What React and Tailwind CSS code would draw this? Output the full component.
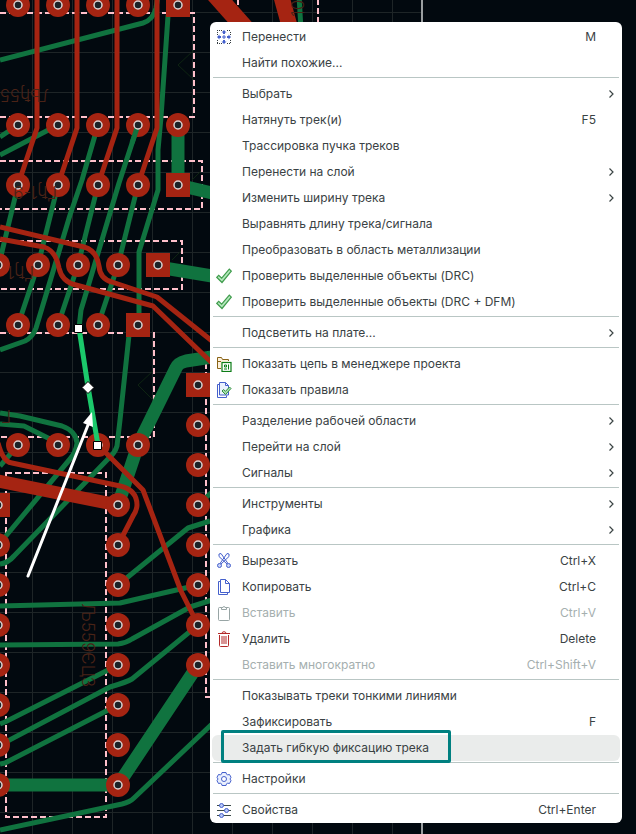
const groups = [
    [
        { label: 'Перенести', icon: 'move', keys: 'M' },
        { label: 'Найти похожие...' },
    ],
    [
        { label: 'Выбрать', sub: true },
        { label: 'Натянуть трек(и)', keys: 'F5' },
        { label: 'Трассировка пучка треков' },
        { label: 'Перенести на слой', sub: true },
        { label: 'Изменить ширину трека', sub: true },
        { label: 'Выравнять длину трека/сигнала' },
        { label: 'Преобразовать в область металлизации' },
        { label: 'Проверить выделенные объекты (DRC)', icon: 'check' },
        { label: 'Проверить выделенные объекты (DRC + DFM)', icon: 'check' },
    ],
    [{ label: 'Подсветить на плате...', sub: true }],
    [
        { label: 'Показать цепь в менеджере проекта', icon: 'folder' },
        { label: 'Показать правила', icon: 'rules' },
    ],
    [
        { label: 'Разделение рабочей области', sub: true },
        { label: 'Перейти на слой', sub: true },
        { label: 'Сигналы', sub: true },
    ],
    [
        { label: 'Инструменты', sub: true },
        { label: 'Графика', sub: true },
    ],
    [
        { label: 'Вырезать', icon: 'cut', keys: 'Ctrl+X' },
        { label: 'Копировать', icon: 'copy', keys: 'Ctrl+C' },
        { label: 'Вставить', icon: 'paste', keys: 'Ctrl+V', disabled: true },
        { label: 'Удалить', icon: 'trash', keys: 'Delete' },
        { label: 'Вставить многократно', keys: 'Ctrl+Shift+V', disabled: true },
    ],
    [
        { label: 'Показывать треки тонкими линиями' },
        { label: 'Зафиксировать', keys: 'F' },
        { label: 'Задать гибкую фиксацию трека', active: true },
    ],
    [{ label: 'Настройки', icon: 'gear' }],
    [{ label: 'Свойства', icon: 'sliders', keys: 'Ctrl+Enter' }],
]

const icons = {
    move: (
        <>
            <path d="M1 1.500h5M11 1.500h4M1 14.500h5M11 14.500h4M1.500 3v3M14.500 3v3M1.500 11v3M14.500 11v3" stroke="#333b40" strokeDasharray="1 1" />
            <path d="M8 1l2.500 2.500H9V5H7V3.500H5.500zM8 15l2.500-2.500H9V11H7v1.500H5.500zM1 8l2.500-2.500V7H5v2H3.500v1.500zM15 8l-2.500-2.500V7H11v2h1.500v1.500z" fill="#4560cc" />
            <path d="M7 7h2v2H7z" stroke="#4560cc" />
        </>
    ),
    check: (
        <path d="M.700 9.300l2-2 3 2.900L13.300 1.200l2 2L6 14.500z" fill="#b5e8bd" stroke="#3f9c4c" strokeWidth="1.200" />
    ),
    folder: (
        <>
            <path d="M5 12.500H1.500v-11h4l1 2h6V5M1.500 5.500H5" fill="#fdf1dc" stroke="#8a6418" />
            <rect x="6" y="6.500" width="9" height="9" fill="#fff" stroke="#0c7c16" strokeWidth="1.200" />
            <path d="M8.500 9h2v2h-2zM12.500 8.500v5M8 13h3" stroke="#0c7c16" />
        </>
    ),
    rules: (
        <>
            <path d="M3.500 2.500h-2v13h9v-2" stroke="#4560cc" />
            <path d="M3.500 .500h6l3 3v9.500h-9zM9.500 .500v3h3" fill="#eaf1fd" stroke="#4560cc" />
            <path d="M6 9l1.500-1.500 2 1.800L13.500 5 15 6.500l-5.500 6z" fill="#a8e0b0" stroke="#2f8c3e" />
        </>
    ),
    cut: (
        <>
            <path d="M3 1v2.500L11 11M5 .500L12 10.500M13 1v2.500L5 11M11 .500L4 10.500M3 1L5 .500M13 1L11 .500" stroke="#4560cc" />
            <circle cx="3.500" cy="12.500" r="2" fill="#c9d4f7" stroke="#4560cc" />
            <circle cx="12.500" cy="12.500" r="2" fill="#c9d4f7" stroke="#4560cc" />
        </>
    ),
    copy: (
        <path d="M4.500 2.500h-2v13h9v-2M4.500 .500h5l4 4v9h-9zM9.500 .500v4h4" stroke="#4560cc" />
    ),
    paste: (
        <>
            <rect x="2.500" y="2.500" width="11" height="13" rx="1" stroke="#98a5a5" />
            <path d="M5.500 4.500v-2h1.500a1 1 0 0 1 2 0h1.500v2z" fill="#fff" stroke="#98a5a5" />
        </>
    ),
    trash: (
        <path d="M2 2.500h12M3.500 4v10.500a1 1 0 0 0 1 1h7a1 1 0 0 0 1-1V4M6 2.500a2 1.800 0 0 1 4 0M6 5v8M8 5v8M10 5v8" stroke="#b32a2a" />
    ),
    gear: (
        <>
            <path d="M6 1.500h4l.500 1.700 1.200.600 1.800-.300 1.500 2.800-1 1.700 1 1.700-1.500 2.800-1.800-.300-1.200.600-.500 1.700H6l-.500-1.700-1.200-.600-1.800.300L1 9.700 2 8 1 6.300l1.500-2.800 1.800.300 1.200-.600z" fill="#eaf0fd" stroke="#4560cc" strokeLinejoin="round" />
            <circle cx="8" cy="8" r="2.500" fill="#fff" stroke="#4560cc" />
        </>
    ),
    sliders: (
        <>
            <path d="M1 3.500h14M1 8.500h14M1 13.500h14" stroke="#3c4b4b" />
            <circle cx="5.500" cy="3.500" r="2" fill="#b9c8f8" stroke="#4560cc" />
            <circle cx="10.500" cy="8.500" r="2" fill="#b9c8f8" stroke="#4560cc" />
            <circle cx="5.500" cy="13.500" r="2" fill="#b9c8f8" stroke="#4560cc" />
        </>
    ),
}

// board geometry
const roundPads = [
    [18, 5], [58, 5], [98, 5], [138, 5],
    [18, 125], [58, 125], [98, 125], [138, 125], [178, 125],
    [18, 185], [58, 185], [98, 185], [138, 185],
    [-2, 265], [38, 265], [78, 265], [118, 265],
    [18, 325], [58, 325], [98, 325],
    [18, 445], [58, 445], [98, 445], [138, 445],
    ...[425, 465, 505, 545, 585, 625, 665].map(y => [198, y]),
    ...[505, 545, 585, 625, 665, 705, 745, 785].map(y => [118, y]),
    ...[545, 585, 625, 665, 705, 745, 785].map(y => [-2, y]),
]

const squarePads = [[178, 5], [178, 185], [158, 265], [138, 325], [198, 385], [-2, 505]]

const outlines = [
    'M0 13H194V117H0',
    'M0 161H202V209H0',
    'M0 241H182V289H0',
    'M0 333H154V437H0',
    'M6 473H106V817H6Z',
    'M240 352H206V697H240',
    'M238 -10V30M318 -10V30',
]

const greenThin = [
    'M0 60L143 23Q153 20 156 8L158 -5',
    'M178 -5L168 16L161 117L158 150V190L139 252V325L129 335L120 420L117 446Q115 453 108 459L14 556Q8 563 0 564',
    'M0 137L18 125', 'M0 155L58 125',
    'M98 125L82 180L70 215L36 328Q33 337 25 341L0 350',
    'M138 125L119 183L81 310L79 328',
    'M18 185L0 260',
    'M58 185L38 265L18 325',
    'M98 185L78 265L58 325',
    'M138 185L118 265L98 325',
    'M0 413L20 416L62 426Q76 431 77 443Q76 452 70 459L5 537',
    'M0 424L24 426L48 438L58 445', 'M0 466L18 445',
    'M118 585L188 528L210 521', 'M198 505L212 492',
    'M0 606L120 603L198 585',
    'M0 645L118 644Q126 643 132 639L190 607L212 600',
    'M118 665L5 722L0 724',
    'M198 625L132 679Q127 682 110 687L0 745',
    'M118 705L5 763L0 764',
    'M0 830L122 804Q130 802 134 798L212 724',
    'M299 -5L301 30', 'M209 -4L245 24',
]

const redThin = [
    'M37 -5V128L18 185', 'M77 -5V128L58 185', 'M117 -5V128L98 185', 'M157 -5V128L138 185',
    'M0 227L84 247Q97 251 99 266Q100 279 112 282L157 297L212 341',
    'M0 239L44 247Q56 251 59 268Q62 282 76 285L153 306L212 363',
    'M98 445L143 490L181 591L198 625',
    'M-2 443Q3 462 12 463L120 486Q137 490 137 505Q137 510 133 516L118 545',
]

function Board() {
    const cols = Array.from({ length: 10 }, (_, i) => 32 + i * 40)
    const rows = Array.from({ length: 21 }, (_, i) => 12 + i * 40)
    return (
        <svg className="absolute inset-0 h-full w-full" aria-hidden="true" fill="none" fontFamily="Inter, sans-serif">
            <g stroke="#1e2527">
                {cols.map(x => <path key={x} d={`M${x}.5 0V900`} />)}
                {rows.map(y => <path key={y} d={`M0 ${y}.5H422`} />)}
            </g>
            <path d="M422 0V900" stroke="#9a9ea0" strokeWidth="2" />

            <g stroke="#0e2412">
                <path d="M194 50L178 65L194 80" />
                <path d="M154 370L138 385L154 401" />
                <path d="M192 180L202 170M172 260L182 250" />
            </g>

            <g stroke="#ffc0cb" strokeWidth="2" strokeDasharray="6 3">
                {outlines.map(d => <path key={d} d={d} />)}
            </g>

            <g stroke="#10733f" strokeWidth="5" strokeLinejoin="round">
                {greenThin.map(d => <path key={d} d={d} />)}
            </g>
            <g stroke="#10733f" strokeWidth="13" strokeLinejoin="round">
                <path d="M178 125V185L212 193" />
                <path d="M158 267L212 276" />
                <path d="M118 505L138 445L176 368Q178 363 186 361L212 357" />
                <path d="M-2 785H118L198 665" />
            </g>

            <g stroke="#a52412" strokeWidth="5" strokeLinejoin="round">
                {redThin.map(d => <path key={d} d={d} />)}
            </g>
            <path d="M-2 481L118 505" stroke="#a52412" strokeWidth="13" />
            <path d="M213 -8L245 28" stroke="#a52412" strokeWidth="18" />
            <path d="M281 -5L290 28" stroke="#a52412" strokeWidth="16" />

            <g fill="#a52412">
                {roundPads.map(([x, y]) => <circle key={`${x}-${y}`} cx={x} cy={y} r="12" />)}
                {squarePads.map(([x, y]) => <rect key={`${x}-${y}`} x={x - 12} y={y - 12} width="24" height="24" />)}
            </g>
            <path d="M138 125L132 143" stroke="#10733f" strokeWidth="5" />
            <g fill="#1b2328" stroke="#dcd3d1" strokeWidth="1.500">
                {[...roundPads, ...squarePads].map(([x, y]) => <circle key={`${x}-${y}`} cx={x} cy={y} r="4" />)}
            </g>

            <g fill="#4a2317" fontSize="17" fontWeight="300">
                <text transform="translate(49 89) rotate(180)">Љђ55</text>
                <text transform="translate(57 186) rotate(180)">Ґђ1-9</text>
                <text transform="translate(34 266) rotate(180)">Ґђ1</text>
                <text transform="translate(82 603) rotate(90)">Љ559ЄЦ3</text>
                <text transform="translate(304 17) rotate(-90)">10</text>
                <text transform="translate(11 410) rotate(180)">Г</text>
            </g>

            <path d="M79 328L88 387L98 445" stroke="#1bc96b" strokeWidth="5" />
            <path d="M28 576L88 425" stroke="#fff" strokeWidth="3" strokeLinecap="round" />
            <path d="M92 412L93 427L83 423Z" fill="#fff" />
            <g fill="#fff" stroke="#000">
                <path d="M74.500 324.500h8v8h-8zM93.500 441.500h8v8h-8zM88 381.500l6 6-6 6-6-6z" />
            </g>
        </svg>
    )
}

function MenuItem({ label, icon, keys, sub, disabled, active }) {
    return (
        <button
            type="button"
            role="menuitem"
            disabled={disabled}
            aria-haspopup={sub ? 'menu' : undefined}
            className={`relative mx-0.5 flex h-[26px] items-center rounded-md pr-1 pl-1 text-left ${active ? 'bg-[#eaeceb]' : ''} ${disabled ? 'text-[#a5afaf]' : 'text-[#3a4244]'}`}
        >
            <span className="w-[26px] shrink-0">
                {icon && <svg viewBox="0 0 16 16" className="h-4 w-4" fill="none" aria-hidden="true">{icons[icon]}</svg>}
            </span>
            <span className="flex-1 whitespace-nowrap">{label}</span>
            {keys && <span className="mr-5">{keys}</span>}
            {sub && (
                <svg viewBox="0 0 8 10" className="h-[10px] w-2" fill="none" aria-hidden="true">
                    <path d="M1.500 1.500L5 5L1.500 8.500" stroke="#3c4545" strokeWidth="1.200" />
                </svg>
            )}
            {active && <span className="absolute -top-[5px] left-[9px] h-[33px] w-[230px] rounded-xs border-3 border-[#008080]" />}
        </button>
    )
}

export default function App() {
    return (
        <div className="relative min-h-screen overflow-hidden bg-[#02090f] pt-[22px] pb-[11px] font-['Inter',sans-serif] text-[12px] leading-4 font-normal">
            <Board />
            <div role="menu" className="relative mr-[14px] ml-auto flex w-[412px] flex-col rounded-md bg-white pt-0.5">
                {groups.map((items, i) => (
                    <div key={i} role="group" className="flex flex-col">
                        {i > 0 && <div className="mx-[3px] mt-px mb-[3px] h-px bg-[#b9c6c4]" />}
                        {items.map(item => <MenuItem key={item.label} {...item} />)}
                    </div>
                ))}
            </div>
        </div>
    )
}
